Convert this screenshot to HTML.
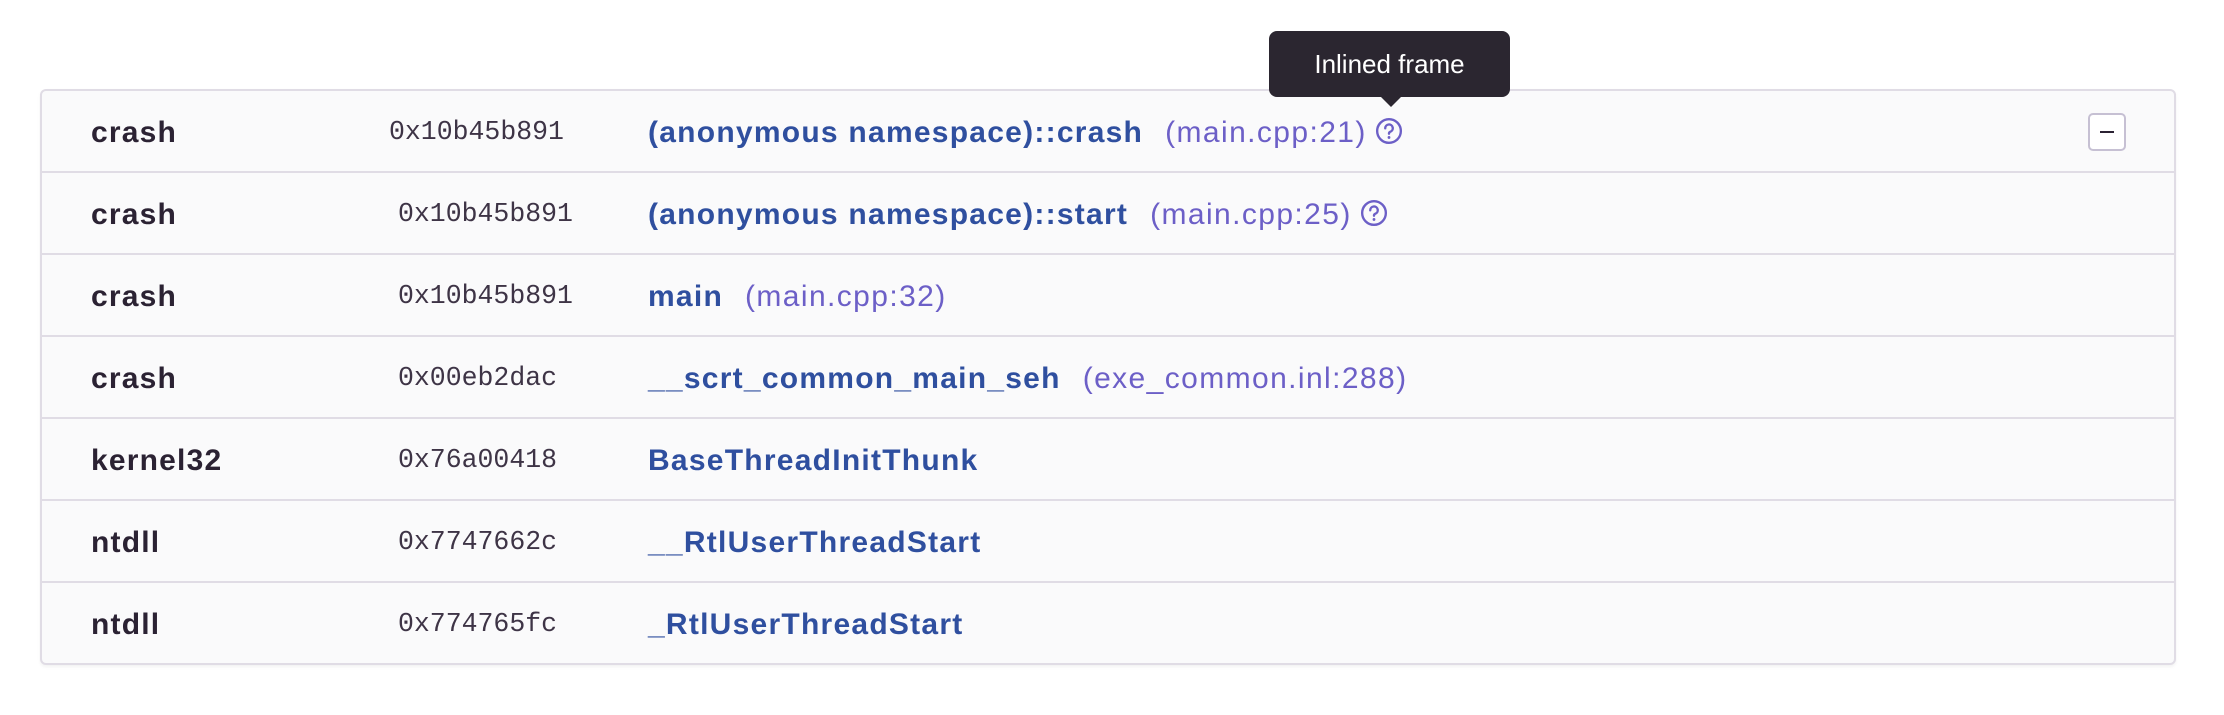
<!DOCTYPE html>
<html><head><meta charset="utf-8"><style>
html,body{margin:0;padding:0;background:#fff;width:2224px;height:715px;overflow:hidden;font-family:"Liberation Sans",sans-serif;}
.card{position:absolute;left:40px;top:89px;width:2136px;height:576px;border:2px solid #e0dce5;border-radius:6px;background:#fafafb;box-sizing:border-box;box-shadow:0 2px 3px rgba(0,0,0,0.05);}
.row{position:absolute;left:0;right:0;height:82px;border-bottom:2px solid #e0dce5;box-sizing:border-box;}
.row:last-child{border-bottom:none;}
.n{position:absolute;left:49px;top:1px;line-height:82px;font-size:30px;letter-spacing:1.2px;font-weight:bold;color:#2b2233;}
.a{position:absolute;top:0;line-height:82px;font-family:"Liberation Mono",monospace;font-size:26.5px;color:#3e3446;}
.f{position:absolute;left:606px;top:1px;line-height:82px;font-size:30px;letter-spacing:1.25px;white-space:nowrap;}
.f b{color:#2f4f9f;}
.f span{color:#6c5fc7;font-weight:normal;margin-left:22px;letter-spacing:1.4px;}
.q{display:inline-block;vertical-align:middle;margin-left:8px;margin-top:-6px;}
.tip{position:absolute;left:1269px;top:31px;width:241px;height:66px;background:#2b2630;border-radius:8px;color:#fff;font-size:26px;line-height:66px;text-align:center;}
.tip:after{content:"";position:absolute;left:112px;top:66px;border-left:10px solid transparent;border-right:10px solid transparent;border-top:10px solid #2b2630;}
.btn{position:absolute;left:2046px;top:22px;width:38px;height:38px;border:2px solid #c6c0d3;border-radius:5px;box-sizing:border-box;background:#fff;}
.btn:after{content:"";position:absolute;left:10px;top:16px;width:14px;height:2px;background:#2b2233;}
</style></head><body>
<div class="card">
<div class="row" style="top:0"><div class="n">crash</div><div class="a" style="left:347px">0x10b45b891</div><div class="f"><b>(anonymous namespace)::crash</b><span>(main.cpp:21)</span><svg class="q" width="28" height="28" viewBox="0 0 26 26"><circle cx="13" cy="13" r="11" fill="none" stroke="#6c5fc7" stroke-width="2.2"/><path d="M9.5 10.5a3.5 3.5 0 1 1 4.5 3.3c-.8.3-1 .8-1 1.7" fill="none" stroke="#6c5fc7" stroke-width="2.2" stroke-linecap="round"/><circle cx="13" cy="19" r="1.3" fill="#6c5fc7"/></svg></div><div class="btn"></div></div>
<div class="row" style="top:82px"><div class="n">crash</div><div class="a" style="left:356px">0x10b45b891</div><div class="f"><b>(anonymous namespace)::start</b><span>(main.cpp:25)</span><svg class="q" width="28" height="28" viewBox="0 0 26 26"><circle cx="13" cy="13" r="11" fill="none" stroke="#6c5fc7" stroke-width="2.2"/><path d="M9.5 10.5a3.5 3.5 0 1 1 4.5 3.3c-.8.3-1 .8-1 1.7" fill="none" stroke="#6c5fc7" stroke-width="2.2" stroke-linecap="round"/><circle cx="13" cy="19" r="1.3" fill="#6c5fc7"/></svg></div></div>
<div class="row" style="top:164px"><div class="n">crash</div><div class="a" style="left:356px">0x10b45b891</div><div class="f"><b>main</b><span>(main.cpp:32)</span></div></div>
<div class="row" style="top:246px"><div class="n">crash</div><div class="a" style="left:356px">0x00eb2dac</div><div class="f"><b>__scrt_common_main_seh</b><span>(exe_common.inl:288)</span></div></div>
<div class="row" style="top:328px"><div class="n">kernel32</div><div class="a" style="left:356px">0x76a00418</div><div class="f"><b>BaseThreadInitThunk</b></div></div>
<div class="row" style="top:410px"><div class="n">ntdll</div><div class="a" style="left:356px">0x7747662c</div><div class="f"><b>__RtlUserThreadStart</b></div></div>
<div class="row" style="top:492px"><div class="n">ntdll</div><div class="a" style="left:356px">0x774765fc</div><div class="f"><b>_RtlUserThreadStart</b></div></div>
</div>
<div class="tip">Inlined frame</div>
</body></html>
